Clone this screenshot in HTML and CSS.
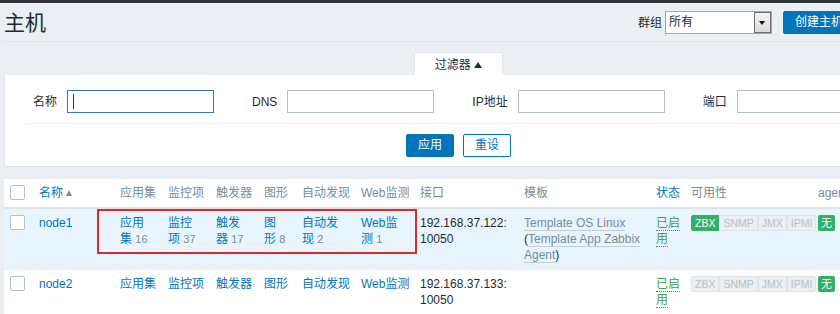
FILE: index.html
```html
<!DOCTYPE html>
<html lang="zh-CN">

<head>
    <meta charset="UTF-8">
    <meta name="viewport" content="width=device-width, initial-scale=1.0">
    <title>主机</title>
    <link rel="stylesheet" href="styles.css">
</head>

<body>

    <div class="topbar"></div>

    <div class="page">
        <header class="header">
            <h1>主机</h1>
            <div class="header-controls">
                <span class="group-label">群组</span>
                <div class="select">
                    <span class="select-value">所有</span>
                    <span class="select-arrow"></span>
                </div>
                <button class="btn">创建主机</button>
                <button class="btn">导入</button>
            </div>
        </header>

        <!-- Filter -->
        <div class="filter">
            <div class="filter-tab">过滤器 <span class="arrow-up dark"></span></div>
            <div class="filter-body">
                <div class="filter-fields">
                    <div class="field">
                        <span class="field-label">名称</span>
                        <div class="input focused"><span class="caret"></span></div>
                    </div>
                    <div class="field">
                        <span class="field-label">DNS</span>
                        <div class="input"></div>
                    </div>
                    <div class="field">
                        <span class="field-label">IP地址</span>
                        <div class="input"></div>
                    </div>
                    <div class="field">
                        <span class="field-label">端口</span>
                        <div class="input"></div>
                    </div>
                </div>
                <div class="filter-buttons">
                    <button class="btn">应用</button>
                    <button class="btn btn-alt">重设</button>
                </div>
            </div>
        </div>

        <!-- Host list -->
        <div class="list">
            <table class="hosts">
                <thead>
                    <tr>
                        <th class="col-check"><span class="checkbox"></span></th>
                        <th class="col-name"><a class="link">名称</a> <span class="arrow-up"></span></th>
                        <th class="col-apps">应用集</th>
                        <th class="col-items">监控项</th>
                        <th class="col-triggers">触发器</th>
                        <th class="col-graphs">图形</th>
                        <th class="col-discovery">自动发现</th>
                        <th class="col-web">Web监测</th>
                        <th class="col-iface">接口</th>
                        <th class="col-templates">模板</th>
                        <th class="col-status"><a class="link">状态</a></th>
                        <th class="col-avail">可用性</th>
                        <th class="col-enc">agent 加密</th>
                        <th class="col-info">信息</th>
                    </tr>
                </thead>
                <tbody>
                    <tr class="selected">
                        <td><span class="checkbox"></span></td>
                        <td><a class="link">node1</a></td>
                        <td><a class="link">应用集</a>&nbsp;<span class="count">16</span></td>
                        <td><a class="link">监控项</a>&nbsp;<span class="count">37</span></td>
                        <td><a class="link">触发器</a>&nbsp;<span class="count">17</span></td>
                        <td><a class="link">图形</a>&nbsp;<span class="count">8</span></td>
                        <td><a class="link">自动发现</a>&nbsp;<span class="count">2</span></td>
                        <td><a class="link">Web监测</a>&nbsp;<span class="count">1</span></td>
                        <td>192.168.37.122: 10050</td>
                        <td><a class="link-grey">Template OS Linux</a> (<a class="link-grey">Template App Zabbix Agent</a>)</td>
                        <td><a class="link-green">已启用</a></td>
                        <td>
                            <span class="avail">
                                <span class="on">ZBX</span><span>SNMP</span><span>JMX</span><span>IPMI</span>
                            </span>
                        </td>
                        <td><span class="enc">无</span></td>
                        <td></td>
                    </tr>
                    <tr>
                        <td><span class="checkbox"></span></td>
                        <td><a class="link">node2</a></td>
                        <td><a class="link">应用集</a></td>
                        <td><a class="link">监控项</a></td>
                        <td><a class="link">触发器</a></td>
                        <td><a class="link">图形</a></td>
                        <td><a class="link">自动发现</a></td>
                        <td><a class="link">Web监测</a></td>
                        <td>192.168.37.133: 10050</td>
                        <td></td>
                        <td><a class="link-green">已启用</a></td>
                        <td>
                            <span class="avail">
                                <span>ZBX</span><span>SNMP</span><span>JMX</span><span>IPMI</span>
                            </span>
                        </td>
                        <td><span class="enc">无</span></td>
                        <td></td>
                    </tr>
                </tbody>
            </table>
            <!-- annotation box -->
            <div class="mark"></div>
        </div>
    </div>

</body>

</html>
```

FILE: styles.css
```css
/* General Page Styles */
html,
body {
    overflow: hidden;
}

body {
    margin: 0;
    background: #ebeef2;
    color: #1f2c33;
    font-family: "Liberation Sans", "Noto Sans CJK SC", sans-serif;
    font-size: 12px;
    line-height: 16px;
}

.topbar {
    height: 3px;
    background: #2f3337;
}

.page {
    width: 909px;
    margin-left: 4px;
}

button {
    font-family: inherit;
    font-size: 12px;
}

/* Header */
.header {
    display: flex;
    justify-content: space-between;
    align-items: center;
    height: 39px;
    padding-top: 1px;
    box-sizing: border-box;
    border-bottom: 1px solid #dfe4e7;
}

.header h1 {
    margin: 0;
    font-size: 21px;
    font-weight: normal;
    line-height: 24px;
}

.header-controls {
    display: flex;
    align-items: center;
}

.group-label {
    margin-right: 3px;
}

.select {
    display: flex;
    align-items: stretch;
    width: 107px;
    height: 23px;
    box-sizing: border-box;
    border: 1px solid #a5a5a5;
    background: #fff;
    margin-right: 11px;
}

.select-value {
    flex: 1;
    padding-left: 3px;
    line-height: 21px;
}

.select-arrow {
    width: 17px;
    box-sizing: border-box;
    border: 1px solid #6f6f6f;
    background: linear-gradient(#f4f4f4, #dcdcdc);
    display: flex;
    align-items: center;
    justify-content: center;
}

.select-arrow::after {
    content: "";
    border-left: 3px solid transparent;
    border-right: 3px solid transparent;
    border-top: 4px solid #111;
}

.btn {
    height: 23px;
    padding: 0 11px;
    border: 1px solid #0275b8;
    border-radius: 2px;
    background: #0275b8;
    color: #fff;
    line-height: 21px;
}

.header-controls .btn + .btn {
    margin-left: 10px;
}

.btn-alt {
    background: #fff;
    color: #0275b8;
}

/* Small triangles */
.arrow-up {
    display: inline-block;
    vertical-align: middle;
    margin-top: -2px;
    border-left: 3px solid transparent;
    border-right: 3px solid transparent;
    border-bottom: 6px solid #768d99;
}

.arrow-up.dark {
    border-left-width: 4px;
    border-right-width: 4px;
    border-bottom-color: #1f2c33;
}

/* Filter */
.filter {
    margin-top: 10px;
}

.filter-tab {
    width: 89px;
    height: 23px;
    margin: 0 auto;
    box-sizing: border-box;
    background: #fff;
    border: 1px solid #e3e7ea;
    border-bottom: none;
    text-align: center;
    line-height: 24px;
}

.filter-body {
    background: #fff;
    border: 1px solid #dfe4e7;
    border-top: none;
    padding: 15px 0 9px;
}

.filter-fields {
    display: flex;
    align-items: center;
    gap: 38px;
    margin: 0 20px;
    padding: 0 0 10px 8px;
    border-bottom: 1px solid #ebeef2;
}

.field {
    display: flex;
    align-items: center;
    gap: 10px;
}

.input {
    width: 147px;
    height: 23px;
    box-sizing: border-box;
    border: 1px solid #b4c1c8;
    background: #fff;
    padding: 3px 5px;
}

.input.focused {
    border-color: #3a77ad;
}

.caret {
    display: block;
    width: 1px;
    height: 15px;
    background: #333;
}

.filter-buttons {
    display: flex;
    justify-content: center;
    gap: 9px;
    margin-top: 10px;
}

/* Host list */
.list {
    position: relative;
    margin-top: 12px;
    background: #fff;
}

.hosts {
    width: 100%;
    border-collapse: collapse;
    table-layout: fixed;
}

.hosts th,
.hosts td {
    box-sizing: border-box;
    padding: 6px 5px;
    text-align: left;
    vertical-align: top;
}

.hosts th {
    font-weight: normal;
    color: #768d99;
    white-space: nowrap;
    overflow: hidden;
    border-bottom: 2px solid #dfe4e7;
}

.hosts td {
    border-bottom: 1px solid #ebeef2;
}

.hosts th:first-child,
.hosts td:first-child {
    padding-left: 6px;
}

.col-check { width: 30px; }
.col-name { width: 81px; }
.col-apps { width: 48px; }
.col-items { width: 48px; }
.col-triggers { width: 48px; }
.col-graphs { width: 38px; }
.col-discovery { width: 59px; }
.col-web { width: 59px; }
.col-iface { width: 104px; }
.col-templates { width: 132px; }
.col-status { width: 35px; }
.col-avail { width: 127px; }
.col-enc { width: 70px; }

.selected td {
    background: #e8f5ff;
}

.checkbox {
    display: inline-block;
    vertical-align: top;
    width: 15px;
    height: 15px;
    box-sizing: border-box;
    border: 1px solid #b4c1c8;
    border-radius: 2px;
    background: #fff;
}

.link {
    color: #0275b8;
}

.count {
    color: #768d99;
    font-size: 11px;
}

.link-grey {
    color: #768d99;
    border-bottom: 1px solid #c5ced3;
}

.link-green {
    color: #429e47;
    border-bottom: 1px dotted #429e47;
}

/* Availability badges */
.avail {
    display: inline-flex;
    vertical-align: top;
}

.avail span {
    padding: 0 3px;
    border: 1px solid #dfe4e7;
    background: #ebeef2;
    color: #b7c3c9;
    font-size: 10.5px;
    line-height: 14px;
}

.avail span:first-child {
    border-radius: 2px 0 0 2px;
}

.avail span:last-child {
    border-radius: 0 2px 2px 0;
}

.avail .on {
    background: #34af67;
    border-color: #34af67;
    color: #fff;
}

.enc {
    display: inline-block;
    vertical-align: top;
    padding: 0 3px;
    border-radius: 2px;
    background: #34af67;
    color: #fff;
    font-size: 11px;
    line-height: 16px;
}

/* Red annotation */
.mark {
    position: absolute;
    left: 93px;
    top: 30px;
    width: 320px;
    height: 45px;
    box-sizing: border-box;
    border: 2px solid #e3262a;
}
```
